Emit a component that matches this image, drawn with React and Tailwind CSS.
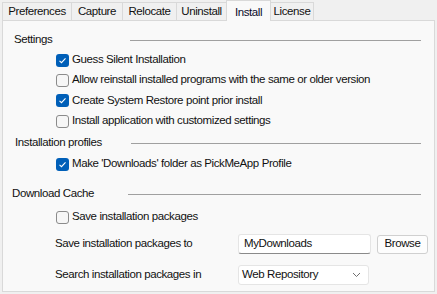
import React, { useState } from 'react';

const tabs = ["Preferences", "Capture", "Relocate", "Uninstall", "Install", "License"];
const tabWidths = ["w-[70px]", "w-[52px]", "w-[55px]", "w-[51px]", "w-[45px]", "w-[44px]"];

const Check = ({ checked, onClick }) => (
    <span
        onClick={onClick}
        className={`w-[13px] h-[13px] rounded-[3px] flex items-center justify-center shrink-0 ${checked ? "bg-[#005fb8]" : "bg-[#f6f6f6] border border-[#8b8b8b]"}`}
    >
        {checked && (
            <svg width="9" height="9" viewBox="0 0 9 9">
                <path d="M1.5 4.8 L3.5 6.7 L7.5 2.3" fill="none" stroke="#ffffff" strokeWidth="1.1" />
            </svg>
        )}
    </span>
);

const Header = ({ label, className = "" }) => (
    <div className={`flex items-center h-[20px] ${className}`}>
        <span className="w-[116px]">{label}</span>
        <div className="flex-1 h-px bg-[#a0a0a0] mr-[13px]"></div>
    </div>
);

const App = () => {
    const [opts, setOpts] = useState({
        silent: true,
        reinstall: false,
        restore: true,
        custom: false,
        downloads: true,
        save: false
    });

    const toggle = (key) => setOpts(prev => ({ ...prev, [key]: !prev[key] }));

    const CheckRow = ({ name, label, className = "" }) => (
        <div className={`flex items-center gap-[3px] h-[20px] pl-[53px] ${className}`}>
            <Check checked={opts[name]} onClick={() => toggle(name)} />
            <span>{label}</span>
        </div>
    );

    return (
        <div className="w-[437px] h-[294px] bg-[#f0f0f0] text-[11.5px] tracking-[-0.4px] text-[#111] overflow-hidden" style={{ fontFamily: '"Liberation Sans", Arial, sans-serif' }}>
            <div className="flex items-end h-[21px] pl-[2px]">
                {tabs.map((t, i) => (
                    <div
                        key={t}
                        className={`${tabWidths[i]} flex justify-center border border-[#d9d9d9] ${i > 0 ? "-ml-px" : ""} ${t === "Install" ? "h-[21px] bg-[#f9f9f9] border-b-0 items-start pt-[3px] relative z-10 text-[#0a0a2a]" : "h-[19px] bg-[#f0f0f0] items-center"}`}
                    >
                        {t}
                    </div>
                ))}
            </div>
            <div className="mx-[2px] -mt-px h-[272px] bg-[#f9f9f9] border border-[#d9d9d9] pt-[9px]">
                <Header label="Settings" className="pl-[11px]" />
                <CheckRow name="silent" label="Guess Silent Installation" />
                <CheckRow name="reinstall" label="Allow reinstall installed programs with the same or older version" />
                <CheckRow name="restore" label="Create System Restore point prior install" className="h-[21px]" />
                <CheckRow name="custom" label="Install application with customized settings" />
                <Header label="Installation profiles" className="pl-[12px] mt-[2px]" />
                <CheckRow name="downloads" label="Make 'Downloads' folder as PickMeApp Profile" className="mt-[1px]" />
                <Header label="Download Cache" className="pl-[9px] mt-[10px]" />
                <CheckRow name="save" label="Save installation packages" className="mt-[3px]" />
                <div className="flex items-center h-[20px] mt-[7px] pl-[52px]">
                    <span className="w-[183px]">Save installation packages to</span>
                    <div className="w-[133px] h-[20px] bg-white border border-[#e5e5e5] border-b-[#8a8a8a] rounded-[3px] flex items-center pl-[5px]">MyDownloads</div>
                    <button className="ml-[6px] w-[51px] h-[19px] bg-[#fdfdfd] border border-[#d0d0d0] rounded-[3px] flex items-center justify-center">Browse</button>
                </div>
                <div className="flex items-center h-[20px] mt-[11px] pl-[52px]">
                    <span className="w-[183px]">Search installation packages in</span>
                    <div className="w-[131px] h-[20px] bg-white border border-[#e5e5e5] rounded-[3px] flex items-center justify-between pl-[3px] pr-[7px]">
                        <span>Web Repository</span>
                        <svg width="9" height="6" viewBox="0 0 9 6">
                            <path d="M1 1 L4.5 4.5 L8 1" fill="none" stroke="#606060" strokeWidth="0.9" />
                        </svg>
                    </div>
                </div>
            </div>
        </div>
    );
};

export default App;
